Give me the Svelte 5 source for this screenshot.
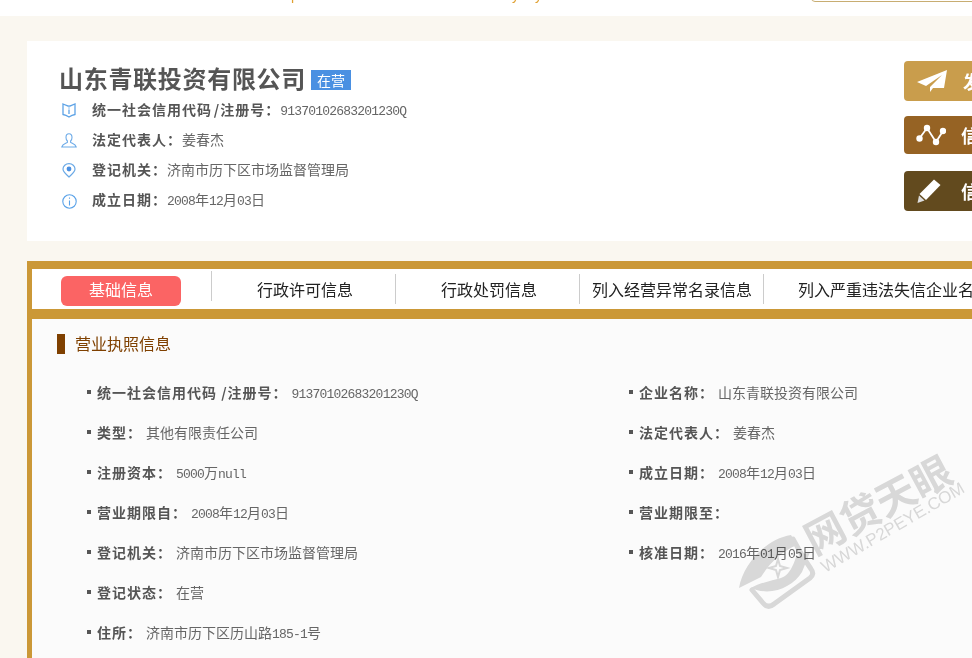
<script>
  const contacts = [
    { icon: 'book', label: '统一社会信用代码\u200a/注册号：', value: '91370102683201230Q' },
    { icon: 'user', label: '法定代表人：', value: '姜春杰' },
    { icon: 'pin', label: '登记机关：', value: '济南市历下区市场监督管理局' },
    { icon: 'info', label: '成立日期：', value: '2008年12月03日' }
  ]

  const tabs = ['基础信息', '行政许可信息', '行政处罚信息', '列入经营异常名录信息', '列入严重违法失信企业名单信息']

  const rows = [
    [{ label: '统一社会信用代码 /注册号：', value: '91370102683201230Q' }, { label: '企业名称：', value: '山东青联投资有限公司' }],
    [{ label: '类型：', value: '其他有限责任公司' }, { label: '法定代表人：', value: '姜春杰' }],
    [{ label: '注册资本：', value: '5000万null' }, { label: '成立日期：', value: '2008年12月03日' }],
    [{ label: '营业期限自：', value: '2008年12月03日' }, { label: '营业期限至：', value: '' }],
    [{ label: '登记机关：', value: '济南市历下区市场监督管理局' }, { label: '核准日期：', value: '2016年01月05日' }],
    [{ label: '登记状态：', value: '在营' }, null],
    [{ label: '住所：', value: '济南市历下区历山路185-1号' }, null]
  ]

  // latin runs get their own span, the source font had half-width digits
  function parts (text) {
    return text.split(/([0-9A-Za-z-]+)/).filter(Boolean).map((t) => ({
      text: t,
      latin: /^[0-9A-Za-z-]+$/.test(t)
    }))
  }
</script>

{#snippet mixed(text)}
  {#each parts(text) as p}
    {#if p.latin}<span class="num">{p.text}</span>{:else}{p.text}{/if}
  {/each}
{/snippet}

<div class="page">
  <header class="top">
    <span class="mark first">p</span>
    <span class="mark second">y</span>
    <span class="mark third">y</span>
    <div class="search"></div>
  </header>

  <section class="card">
    <div class="summary">
      <h1>山东青联投资有限公司<span class="badge">在营</span></h1>
      {#each contacts as c}
        <div class="contact">
          <span class="ico">
            {#if c.icon === 'book'}
              <svg width="14" height="15" viewBox="0 0 14 15" fill="none" stroke="#5ea3e6" stroke-width="1.3">
                <path d="M1 1 L5 2.6 Q7 3.6 9 2.6 L13 1 V11.5 Q10 12 7 14 Q4 12 1 11.5 Z" />
                <path d="M7 6.5 V11 M7 4.4 V5.4" />
              </svg>
            {:else if c.icon === 'user'}
              <svg width="16" height="15" viewBox="0 0 16 15" fill="none" stroke="#6dabe8" stroke-width="1.1">
                <path d="M8 .8 C5.8 .8 5 2.6 5 4.4 C5 6 5.6 7.2 6.4 8 V9.4 C4.6 10.6 1.6 10.8 .8 14 H15.2 C14.4 10.8 11.4 10.6 9.6 9.4 V8 C10.4 7.2 11 6 11 4.4 C11 2.6 10.2 .8 8 .8 Z" />
              </svg>
            {:else if c.icon === 'pin'}
              <svg width="14" height="15" viewBox="0 0 14 15" fill="none" stroke="#6aa9e6" stroke-width="1.2">
                <path d="M7 14 C4 11 1 9 1 6 A6 5.4 0 0 1 13 6 C13 9 10 11 7 14 Z" />
                <circle cx="7" cy="6" r="2.4" fill="#4a90e2" stroke="none" />
              </svg>
            {:else}
              <svg class="info" width="15" height="15" viewBox="0 0 15 15" fill="none" stroke="#5aa2e8" stroke-width="1.1">
                <circle cx="7.5" cy="7.5" r="6.7" />
                <path d="M7.5 6.4 V11.4 M7.5 3.6 V4.8" />
              </svg>
            {/if}
          </span>
          <b>{c.label}</b><span class="val">{@render mixed(c.value)}</span>
        </div>
      {/each}
    </div>

    <div class="actions">
      <div class="act gold">
        <svg width="32" height="24" viewBox="0 0 32 24" fill="#fff">
          <path d="M31 1 L1 13 L10 17 L26 6 L14 18 L14 23 L17 19 L28 19 Z" />
        </svg>
        <span>发表评论</span>
      </div>
      <div class="act brown">
        <svg width="30" height="24" viewBox="0 0 30 24" fill="none" stroke="#fff" stroke-width="1.8">
          <path d="M3 16 L11 5 L20 19 L27 8" />
          <g fill="#fff" stroke="none">
            <circle cx="3.5" cy="15.5" r="3.2" /><circle cx="11" cy="5" r="3.2" />
            <circle cx="20" cy="19" r="3.2" /><circle cx="27" cy="8" r="3.2" />
          </g>
        </svg>
        <span>信用图谱</span>
      </div>
      <div class="act dark">
        <svg width="26" height="26" viewBox="0 0 26 26" fill="#fff">
          <path d="M18 1.5 L24.5 7 L10 22 L3.5 16 Z" />
          <path d="M3 17.5 L8.5 22.5 L1.5 25 Z" fill="#ddd" />
        </svg>
        <span>信用评价</span>
      </div>
    </div>
  </section>

  <section class="panel">
    <nav class="tabs">
      {#each tabs as t, i}
        <div class="tab">
          <span class:active={i === 0}>{t}</span>
        </div>
      {/each}
    </nav>

    <div class="body">
      <h2>营业执照信息</h2>
      <div class="grid">
        {#each rows as row}
          {#each row as cell}
            <div class="cell">
              {#if cell}
                <i class="dot"></i><b>{cell.label}</b><span class="val">{@render mixed(cell.value)}</span>
              {/if}
            </div>
          {/each}
        {/each}
      </div>

      <div class="watermark">
        <svg width="240" height="170" viewBox="0 0 240 170">
          <path d="M17 141 L28 154 Q33 160 39 155 L75 129 Q80 125 76 120 L68 108 M58 90 L68 108" fill="none" stroke="#dcdcdc" stroke-width="5" stroke-linecap="round" />
          <path d="M4 139 C8 116 30 90 56 86 L62 96 C48 102 36 112 26 128 Z" fill="#dcdcdc" />
          <path d="M16 139 C36 148 58 138 67 123 L75 103 L61 108 C58 118 54 124 50 127 C44 131 28 132 16 139 Z" fill="#dcdcdc" />
          <path d="M43 110 L45 117 L52 119 L45 121 L43 128 L41 121 L34 119 L41 117 Z" fill="none" stroke="#dcdcdc" stroke-width="2" />
        </svg>
        <span class="wm-name">网贷天眼</span>
        <span class="wm-url">WWW.P2PEYE.COM</span>
      </div>
    </div>
  </section>
</div>

<style>
  :global(html), :global(body) {
    margin: 0;
    overflow: hidden;
    height: 100%;
    background: #faf7f0;
  }

  .page {
    width: 1240px;
    height: 658px;
    overflow: hidden;
    font-family: "Noto Sans CJK SC", "Liberation Sans", sans-serif;
    font-size: 14px;
    color: #555;
  }

  .top {
    position: relative;
    height: 16px;
    background: #fff;
    overflow: hidden;
  }

  .mark {
    position: absolute;
    top: -14px;
    font: 14px/18px "Liberation Sans", sans-serif;
    color: #e0a030;
  }
  .first { left: 291px; }
  .second { left: 512px; }
  .third { left: 535px; }

  .search {
    position: absolute;
    left: 811px;
    top: -20px;
    width: 300px;
    height: 22px;
    border: 1px solid #c8ad72;
    border-radius: 4px;
    box-sizing: border-box;
  }

  .card {
    display: flex;
    margin: 25px 0 20px 27px;
    height: 200px;
    background: #fff;
  }

  .summary {
    width: 877px;
    padding: 20px 0 0 32px;
    box-sizing: border-box;
  }

  h1 {
    display: flex;
    align-items: center;
    margin: 0 0 -1px;
    height: 34px;
    font-size: 24px;
    font-weight: 700;
    letter-spacing: .7px;
    line-height: 34px;
    color: #555;
  }

  .badge {
    margin: 4px 0 0 5px;
    width: 40px;
    height: 20px;
    background: #4a90e2;
    color: #fff;
    font-size: 14px;
    font-weight: 400;
    letter-spacing: 0;
    line-height: 20px;
    text-align: center;
  }

  .contact {
    display: flex;
    align-items: center;
    height: 30px;
    white-space: nowrap;
  }

  .ico {
    display: flex;
    justify-content: center;
    width: 20px;
    margin-right: 13px;
    padding-top: 2px;
  }

  .info {
    margin-top: 2px;
  }

  b {
    font-weight: 700;
    letter-spacing: 1px;
    color: #555;
  }

  .val {
    color: #666;
    white-space: pre;
  }

  .num {
    font-family: "Liberation Mono", monospace;
    font-size: 13px;
    letter-spacing: -.8px;
  }

  .actions {
    display: flex;
    flex-direction: column;
    padding-top: 20px;
  }

  .act {
    display: grid;
    grid-template-columns: 47px auto;
    align-items: center;
    justify-content: start;
    width: 200px;
    box-sizing: border-box;
    padding-left: 12px;
    border-radius: 4px;
    color: #fff;
    font-size: 18px;
    font-weight: 700;
  }

  .brown, .dark { grid-template-columns: 45px auto; }

  .gold { height: 40px; background: #c99d4c; margin-bottom: 15px; }
  .brown { height: 38px; background: #966324; margin-bottom: 17px; }
  .dark { height: 40px; background: #624a1e; }

  .panel {
    margin-left: 27px;
    border-top: 8px solid #cb9837;
    border-left: 5px solid #cb9837;
  }

  .tabs {
    display: flex;
    height: 40px;
    background: #fff;
    border-bottom: 10px solid #cb9837;
  }

  .tab {
    position: relative;
    display: flex;
    flex: 0 0 184px;
    justify-content: center;
    align-items: flex-start;
    box-sizing: border-box;
    height: 40px;
    font-size: 16px;
    color: #222;
    white-space: nowrap;
  }

  .tab:first-child { flex-basis: 180px; }

  .tab:last-child {
    flex: 0 0 260px;
    justify-content: flex-start;
    padding-left: 34px;
  }

  .tab:not(:last-child)::after {
    content: "";
    position: absolute;
    right: 0;
    top: 5px;
    bottom: 5px;
    width: 1px;
    background: #ccc;
  }

  .tab:first-child::after {
    top: 2px;
    bottom: 8px;
  }

  .tab span {
    display: block;
    width: 120px;
    height: 30px;
    margin: 7px 0 0 2px;
    line-height: 27px;
    text-align: center;
  }

  .tab:nth-child(4) span { width: 160px; margin-left: 0; }
  .tab:last-child span { width: auto; margin-left: 0; }

  .tab .active {
    margin: 7px 2px 0 0;
    background: #fb6464;
    color: #fff;
    border-radius: 6px;
  }

  .body {
    position: relative;
    height: 339px;
    background: #fbfbfb;
    overflow: hidden;
  }

  h2 {
    margin: 15px 0 0 25px;
    padding-left: 10px;
    height: 20px;
    border-left: 8px solid #7f4000;
    font-size: 16px;
    font-weight: 400;
    line-height: 18px;
    color: #7f4000;
  }

  .grid {
    display: grid;
    grid-template-columns: 542px 400px;
    grid-auto-rows: 40px;
    margin: 18px 0 0 55px;
  }

  .cell {
    display: flex;
    align-items: center;
    white-space: nowrap;
  }

  .dot {
    width: 4px;
    height: 4px;
    margin-right: 6px;
    background: #555;
  }

  .cell b {
    margin-right: 4px;
  }

  .watermark {
    position: absolute;
    left: 703px;
    top: 130px;
    width: 240px;
    height: 170px;
    pointer-events: none;
    color: #dcdcdc;
    mix-blend-mode: multiply;
  }

  .watermark svg {
    position: absolute;
    left: 0;
    top: 0;
  }

  .wm-name {
    position: absolute;
    left: 142px;
    top: 54px;
    font-size: 40px;
    font-weight: 700;
    line-height: 44px;
    white-space: nowrap;
    transform: translate(-50%, -50%) rotate(-28deg);
  }

  .wm-url {
    position: absolute;
    left: 158px;
    top: 79px;
    font-family: "Liberation Sans", sans-serif;
    font-size: 17px;
    white-space: nowrap;
    transform: translate(-50%, -50%) rotate(-30deg);
  }
</style>
